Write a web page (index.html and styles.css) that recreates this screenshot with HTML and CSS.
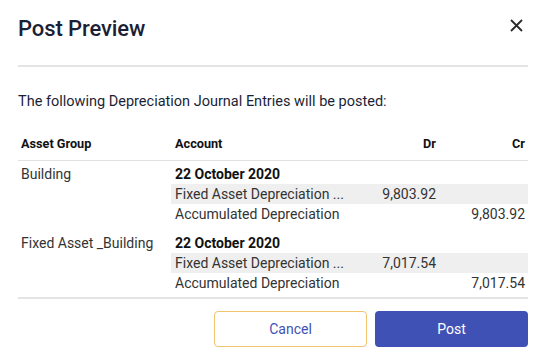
FILE: index.html
```html
<!DOCTYPE html>
<html>
<head>
<meta charset="utf-8">
<link rel="stylesheet" href="styles.css">
</head>
<body>
<div class="dialog">
  <div class="header">
    <h1 class="title">Post Preview</h1>
    <button class="close" aria-label="Close">
      <svg width="13" height="13" viewBox="0 0 13 13"><path d="M1 1L12 12M12 1L1 12" stroke="#2b2b2b" stroke-width="1.8" fill="none"/></svg>
    </button>
  </div>
  <div class="divider"></div>
  <p class="desc">The following Depreciation Journal Entries will be posted:</p>
  <div class="table">
    <div class="thead">
      <div class="th">Asset Group</div>
      <div class="th">Account</div>
      <div class="th num">Dr</div>
      <div class="th num cr">Cr</div>
    </div>
    <div class="group">
      <div class="gname">Building</div>
      <div class="lines">
        <div class="line date"><span class="acc">22 October 2020</span><span class="num"></span><span class="num cr"></span></div>
        <div class="line shade"><span class="acc">Fixed Asset Depreciation ...</span><span class="num">9,803.92</span><span class="num cr"></span></div>
        <div class="line"><span class="acc">Accumulated Depreciation</span><span class="num"></span><span class="num cr">9,803.92</span></div>
      </div>
    </div>
    <div class="group">
      <div class="gname">Fixed Asset _Building</div>
      <div class="lines">
        <div class="line date"><span class="acc">22 October 2020</span><span class="num"></span><span class="num cr"></span></div>
        <div class="line shade"><span class="acc">Fixed Asset Depreciation ...</span><span class="num">7,017.54</span><span class="num cr"></span></div>
        <div class="line"><span class="acc">Accumulated Depreciation</span><span class="num"></span><span class="num cr">7,017.54</span></div>
      </div>
    </div>
  </div>
  <div class="actions">
    <button class="btn cancel">Cancel</button>
    <button class="btn post">Post</button>
  </div>
</div>
</body>
</html>
```

FILE: styles.css
```css
* { box-sizing: border-box; }
html, body { margin: 0; padding: 0; background: #fff; }
body { font-family: Roboto, "Noto Sans", sans-serif; color: #333; }

.dialog { width: 545px; height: 355px; padding: 0 17px 0 18px; }

.header { display: flex; align-items: center; justify-content: space-between; height: 56px; }
.title { margin: 0; font-size: 22px; font-weight: 500; color: #1b1f35; letter-spacing: -0.1px; }
.close { border: 0; background: none; padding: 0; margin: 0 5px 6px 0; width: 13px; height: 13px; display: flex; cursor: pointer; }

.divider { height: 2px; background: #e4e4e4; margin-top: 9px; }

.desc { margin: 27px 0 0; font-size: 14.5px; color: #1b1f35; line-height: 16px; }

.table { margin-top: 17px; }
.thead { display: grid; grid-template-columns: 153px 174px 95px 88px; height: 34px; align-items: center; border-bottom: 1px solid #e2e2e2; padding-bottom: 1px; }
.th { font-size: 12.7px; font-weight: 700; color: #111; padding-left: 3px; }
.th:nth-child(2) { padding-left: 4px; }
.num { text-align: right; padding-right: 4px; }
.th.num { padding-left: 0; }
.cr { padding-right: 3px; }

.group { display: grid; grid-template-columns: 153px 357px; padding: 3px 0 6px; }
.group:last-child { padding-bottom: 4px; }
.gname { font-size: 14px; padding-left: 3px; line-height: 20px; color: #333; }
.lines { display: flex; flex-direction: column; }
.line { display: grid; grid-template-columns: 174px 95px 88px; height: 20px; align-items: center; font-size: 14px; color: #333; }
.line .acc { padding-left: 4px; padding-right: 4px; white-space: nowrap; }
.line.date .acc { font-weight: 700; color: #111; }
.line.shade { background: #efefef; }

.actions { border-top: 2px solid #e4e4e4; display: flex; justify-content: flex-end; gap: 8px; padding-top: 12px; }
.btn { width: 153px; height: 36px; border-radius: 4px; font-family: Roboto, "Noto Sans", sans-serif; font-size: 14px; cursor: pointer; }
.cancel { background: #fff; border: 1.5px solid #f4c36d; color: #3f51b5; }
.post { background: #3f51b5; border: 0; color: #fff; }
```
